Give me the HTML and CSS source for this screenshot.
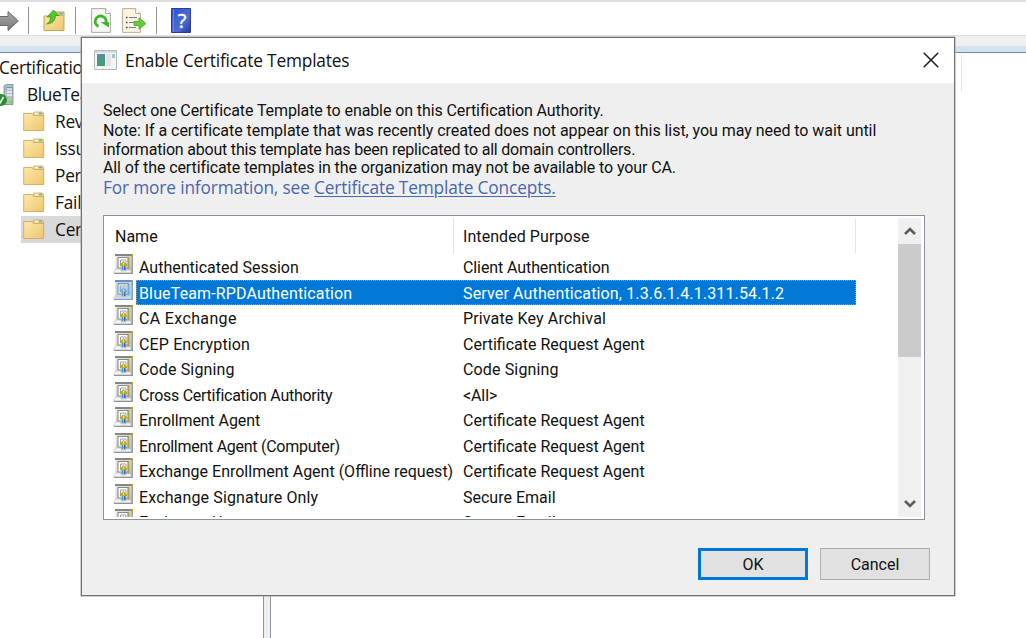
FILE: index.html
```html
<!DOCTYPE html>
<html lang="en">
<head>
<meta charset="utf-8">
<title>Enable Certificate Templates</title>
<link rel="stylesheet" href="styles.css">
</head>
<body>
<svg width="0" height="0" class="defs" aria-hidden="true">
  <defs>
    <linearGradient id="gold" x1="0" y1="0" x2="1" y2="1"><stop offset="0" stop-color="#ffe9ac"/><stop offset="1" stop-color="#ecc66e"/></linearGradient>
    <linearGradient id="grey" x1="0" y1="0" x2="0" y2="1"><stop offset="0" stop-color="#aaa"/><stop offset="1" stop-color="#777"/></linearGradient>
    <linearGradient id="blue" x1="0" y1="0" x2="1" y2="1"><stop offset="0" stop-color="#2d51c9"/><stop offset=".6" stop-color="#4d6ed4"/><stop offset="1" stop-color="#243a9c"/></linearGradient>
    <linearGradient id="app" x1="0" y1="0" x2="0.4" y2="1"><stop offset="0" stop-color="#5b87b8"/><stop offset="1" stop-color="#44a06a"/></linearGradient>
    <linearGradient id="panel" x1="0" y1="0" x2="1" y2="1"><stop offset="0" stop-color="#ececec"/><stop offset="1" stop-color="#b4b4b4"/></linearGradient>
    <symbol id="folder" viewBox="0 0 22 21">
      <path d="M9.500 4.500L11 1h8.500l1 1.500v5h-11z" fill="#f0d38c" stroke="#c9a45c" stroke-width=".8"/>
      <path d="M12 2.500h4" stroke="#fff8dc" stroke-width="1.500"/><path d="M15.500 2.500h3.500" stroke="#5daee0" stroke-width="1.500"/>
      <path d="M.7 2.500h8.500l1.300 2h10.200V19.500H.7z" fill="url(#gold)" stroke="#cfa95c" stroke-width=".9"/>
    </symbol>
    <symbol id="tpl" viewBox="0 0 20 21">
      <path d="M2.500 0H20v20H2.500z" fill="url(#panel)"/>
      <path d="M2 1h17" stroke="#868686" stroke-width="2"/>
      <path d="M19.300 3v17" stroke="#989898" stroke-width="1.200"/>
      <path d="M5 3.500h10v10.500H5z" fill="#fff" stroke="#8a8a8a" stroke-width="1.100"/>
      <path d="M15.600 3v12" stroke="#aaa24a" stroke-width="1.300"/>
      <path d="M7.500 6h5.500v5H7.500z" fill="#fff" stroke="#a0a0a0" stroke-width="1"/>
      <path d="M18.500 0h1.500v3h-1.500z" fill="#b5aa20"/>
      <path d="M10.500 7l4 4-1 1.500h-6L6.500 11z" fill="#b5a92a"/><path d="M10.500 8.500v3" stroke="#eee36a" stroke-width="1.300"/>
      <path d="M2.500 15L.6 18.800h17.400V16h-5v1H8v-2z" fill="#f5f5f5" stroke="#b8b8b8" stroke-width=".6"/>
      <path d="M9.500 12v4" stroke="#35a8b8" stroke-width="1.300"/><path d="M11.800 12v4" stroke="#3348d0" stroke-width="1.300"/>
      <path d="M1 19.500h18.500" stroke="#929292"/>
    </symbol>
  </defs>
</svg>
<div class="console">
  <div class="toolbar">
    <svg class="t-arrow" width="19" height="22" viewBox="0 0 19 22"><path d="M-6 6.500H8V1.500L18.300 11 8 20.500V15.500H-6z" fill="url(#grey)" stroke="#6a6a6a"/></svg>
    <i class="sep s1"></i>
    <svg class="t-up" width="22" height="24" viewBox="0 0 22 24"><path d="M1 8h9l2-4h9v18.500H1z" fill="url(#gold)" stroke="#c5a25a"/><path d="M11 7.500h9.500" stroke="#c5a25a" stroke-width=".8"/><path d="M16 5.600h4" stroke="#58a8dc" stroke-width="1.500"/><path d="M3.500 16c2.500-1 4-3 4-7H4l6.500-7L16 7.500h-3.500c0 5-3.500 8.500-9 8.500z" fill="#55c62b" stroke="#36941a" stroke-width=".7"/></svg>
    <i class="sep s2"></i>
    <svg class="t-ref" width="20" height="25" viewBox="0 0 20 25"><path d="M.6.6h14l4.800 4.800v19H.6z" fill="#f6f6f3" stroke="#aaa"/><path d="M14.600.6v4.800h4.800" fill="#fff" stroke="#aaa"/><path d="M7.500 18.400A5.400 5.400 0 1 1 14.800 15" fill="none" stroke="#3cb628" stroke-width="2.800"/><path d="M9.500 14h8.500v5.500z" fill="#3cb628"/></svg>
    <svg class="t-exp" width="25" height="25" viewBox="0 0 25 25"><path d="M.6.6h13l4.800 4.800v19H.6z" fill="#f9f3df" stroke="#b9ae91"/><path d="M13.600.6v4.800h4.800" fill="#fff" stroke="#b9ae91"/><path d="M4 9.500h1.500M4 14.500h1.500M4 19.500h1.500" stroke="#444" stroke-width="1.500"/><path d="M7 9.500h8M7 14.500h5M7 19.500h7" stroke="#8177a0" stroke-width="1.200"/><path d="M12 13.500h5v-3.700l7 5.700-7 5.700v-3.700h-5z" fill="#62ce38" stroke="#46a725" stroke-width=".8"/></svg>
    <i class="sep s3"></i>
    <svg class="t-help" width="20" height="25" viewBox="0 0 20 25"><path d="M.5.5h19v24H.5z" fill="url(#blue)" stroke="#2a408f"/><path d="M2.500 1v23" stroke="#6b88df"/><text x="11" y="19.500" text-anchor="middle" class="q">?</text></svg>
  </div>
  <div class="band"></div>
  <div class="panes">
    <div class="tree">
      <div class="root">Certification</div>
      <div class="server"><svg width="17" height="22" viewBox="0 0 17 22"><path d="M4 1.500L7 .5h6v20H4z" fill="#b6bec4" stroke="#7c858b" stroke-width=".8"/><path d="M6.500 3h6v3h-6z" fill="#6d96ae"/><path d="M7 5h5M7 8h5M7 11h5" stroke="#edf2f5" stroke-width="1.300"/><path d="M9 18h3" stroke="#67e622" stroke-width="2.500"/><circle cx="1" cy="16" r="6" fill="#24902b"/><path d="M-2 16.500l2 2.500 3.500-6" fill="none" stroke="#fff" stroke-width="1.600"/></svg><span>BlueTeam</span></div>
      <div class="node"><svg width="22" height="21"><use href="#folder"/></svg><span>Rev</span></div>
      <div class="node"><svg width="22" height="21"><use href="#folder"/></svg><span>Issu</span></div>
      <div class="node"><svg width="22" height="21"><use href="#folder"/></svg><span>Per</span></div>
      <div class="node"><svg width="22" height="21"><use href="#folder"/></svg><span>Fail</span></div>
      <div class="node current"><svg width="22" height="21"><use href="#folder"/></svg><span>Cer</span></div>
    </div>
    <div class="splitter"></div>
    <div class="content"><i class="col-end"></i></div>
  </div>
</div>

<div class="dialog">
  <div class="titlebar">
    <svg width="23" height="20" viewBox="0 0 23 20"><path d="M.5.5h22v19H.5z" fill="#f3f5f6" stroke="#b3b8bd"/><path d="M1 2h21" stroke="#ccd2d8" stroke-width="1.500"/><path d="M3 4h8v12H3z" fill="url(#app)"/><path d="M12 4h5v12h-5z" fill="#e2e4e6"/><path d="M18 4h3v4h-3z" fill="#a3c4c4"/></svg>
    <span class="title">Enable Certificate Templates</span>
    <svg class="close" width="16" height="16" viewBox="0 0 16 16"><path d="M.7.7l14.600 14.600M15.300.7L.7 15.300" stroke="#1c1c1c" stroke-width="1.500"/></svg>
  </div>
  <div class="body">
    <div class="note">
      <p class="n1">Select one Certificate Template to enable on this Certification Authority.</p>
      <p class="n2">Note: If a certificate template that was recently created does not appear on this list, you may need to wait until</p>
      <p class="n3">information about this template has been replicated to all domain controllers.</p>
      <p class="n4">All of the certificate templates in the organization may not be available to your CA.</p>
      <p class="more">For more information, see <a>Certificate Template Concepts.</a></p>
    </div>
    <div class="list">
      <div class="table">
        <div class="head"><span class="h1">Name</span><span class="h2">Intended Purpose</span></div>
        <div class="row"><svg><use href="#tpl"/></svg><div class="cells"><span>Authenticated Session</span><span class="snug">Client Authentication</span></div></div>
        <div class="row selected"><svg><use href="#tpl"/></svg><div class="cells"><span class="wide">BlueTeam-RPDAuthentication</span><span class="wide">Server Authentication, 1.3.6.1.4.1.311.54.1.2</span></div></div>
        <div class="row"><svg><use href="#tpl"/></svg><div class="cells"><span class="wider">CA Exchange</span><span class="wide">Private Key Archival</span></div></div>
        <div class="row"><svg><use href="#tpl"/></svg><div class="cells"><span class="wide">CEP Encryption</span><span>Certificate Request Agent</span></div></div>
        <div class="row"><svg><use href="#tpl"/></svg><div class="cells"><span class="wide">Code Signing</span><span class="wide">Code Signing</span></div></div>
        <div class="row"><svg><use href="#tpl"/></svg><div class="cells"><span class="tight">Cross Certification Authority</span><span class="snug">&lt;All&gt;</span></div></div>
        <div class="row"><svg><use href="#tpl"/></svg><div class="cells"><span class="snug">Enrollment Agent</span><span>Certificate Request Agent</span></div></div>
        <div class="row"><svg><use href="#tpl"/></svg><div class="cells"><span class="tight">Enrollment Agent (Computer)</span><span>Certificate Request Agent</span></div></div>
        <div class="row"><svg><use href="#tpl"/></svg><div class="cells"><span>Exchange Enrollment Agent (Offline request)</span><span>Certificate Request Agent</span></div></div>
        <div class="row"><svg><use href="#tpl"/></svg><div class="cells"><span class="wide">Exchange Signature Only</span><span>Secure Email</span></div></div>
        <div class="row"><svg><use href="#tpl"/></svg><div class="cells"><span>Exchange User</span><span>Secure Email</span></div></div>
      </div>
      <div class="scroll">
        <svg width="12" height="10" viewBox="0 0 12 10"><path d="M1 8l5-5 5 5" fill="none" stroke="#5c5c5c" stroke-width="2.600"/></svg>
        <div class="thumb"></div>
        <svg class="down" width="12" height="10" viewBox="0 0 12 10"><path d="M1 2l5 5 5-5" fill="none" stroke="#5c5c5c" stroke-width="2.600"/></svg>
      </div>
    </div>
    <div class="buttons"><button class="ok">OK</button><button>Cancel</button></div>
  </div>
</div>
</body>
</html>
```
FILE: styles.css
```css
* { box-sizing: border-box; }
body { margin: 0; width: 1026px; height: 638px; overflow: hidden; background: #fff; position: relative; color: #111; font-family: "Open Sans", "Noto Sans", sans-serif; }
svg { display: block; flex: none; }
.defs { position: absolute; }
p { margin: 0; }

.console { height: 638px; display: flex; flex-direction: column; }
.toolbar { height: 35px; flex: none; border-top: 2px solid #dedede; display: flex; align-items: flex-start; padding-top: 6px; overflow: hidden; }
.t-arrow { margin-top: 2px; }
.sep { width: 1px; height: 27px; margin-top: -1px; background: #929292; flex: none; }
.s1 { margin-left: 9px; }
.t-up { margin-left: 14px; }
.s2 { margin-left: 10px; }
.t-ref { margin-left: 15px; }
.t-exp { margin-left: 11px; }
.s3 { margin-left: 9px; }
.t-help { margin-left: 14px; overflow: visible; }
.q { font: 20px "Open Sans", sans-serif; fill: #fff; stroke: #fff; stroke-width: .4px; }
.band { height: 18px; flex: none; border-top: 1px solid #dedede; border-bottom: 1px solid #7b8797; background: linear-gradient(#efefef 10px, #d3e2f0 10px); }
.panes { flex: 1; display: flex; min-height: 0; }
.tree { width: 263px; padding-top: 1px; font-size: 17.300px; line-height: 27px; white-space: nowrap; overflow: hidden; }
.root { letter-spacing: -.3px; margin-left: -1px; }
.server { display: flex; align-items: center; letter-spacing: -.4px; }
.server span { margin-left: 10px; }
.node { display: flex; align-items: center; height: 27px; margin-left: 21px; padding-left: 2px; }
.node span { margin-left: 10px; letter-spacing: -.25px; }
.node.current { background: #d9d9d9; }
.splitter { width: 8px; background: #efefef; border-left: 1.500px solid #8d949e; border-right: 1.500px solid #8d949e; }
.content { flex: 1; display: flex; padding: 2px 64px 0 0; justify-content: flex-end; }
.col-end { width: 1px; height: 36px; background: #e5e5e5; }

.dialog { position: absolute; left: 81px; top: 37px; width: 874px; height: 559px; border: 1px solid #727272; background: #efefef; display: flex; flex-direction: column; box-shadow: 0 0 0 .5px #a0a0a0; }
.titlebar { height: 45px; flex: none; background: #fff; display: flex; align-items: center; padding: 0 15px 2px 12px; }
.title { margin: 2px 0 0 8px; font-size: 17.300px; letter-spacing: -.18px; }
.close { margin-left: auto; }
.body { flex: 1; padding: 18px 29px 0 21px; display: flex; flex-direction: column; font-family: Roboto, "Liberation Sans", sans-serif; font-size: 16px; }
.note { height: 115px; white-space: nowrap; }
.note p { height: 19px; line-height: 20px; width: max-content; }
.note .n1 { height: 20px; letter-spacing: -.095px; }
.note .n2 { letter-spacing: -.05px; }
.note .n3 { height: 18px; letter-spacing: -.2px; }
.note .n4 { height: 20px; letter-spacing: -.105px; }
.note .more { height: 20px; line-height: 20px; font-family: "Open Sans", "Noto Sans", sans-serif; font-size: 17.300px; letter-spacing: -.15px; color: #4a67ad; }
.more a { text-decoration: underline; text-underline-offset: 2px; text-decoration-thickness: 1px; }
.list { height: 305px; margin-top: -1px; flex: none; border: 1.500px solid #8b929c; background: #fff; display: flex; justify-content: space-between; padding: 2px 3px 2px 9px; }
.table { width: 743px; overflow: hidden; white-space: nowrap; }
.head { height: 36px; display: flex; line-height: 37px; }
.head span { border-right: 1px solid #e5e5e5; }
.h1 { width: 341px; padding-left: 2px; }
.h2 { width: 402px; padding-left: 9px; letter-spacing: .07px; }
.row { height: 25.500px; display: flex; }
.row svg { width: 20px; height: 21px; }
.cells { margin-left: 3px; width: 720px; height: 25.500px; line-height: 27px; display: grid; grid-template-columns: 324px 1fr; padding-left: 3px; }
.wide { letter-spacing: .14px; }
.wider { letter-spacing: .35px; }
.snug { letter-spacing: -.1px; }
.tight { letter-spacing: -.27px; }
.selected svg { filter: sepia(1) hue-rotate(175deg) saturate(1.700) brightness(.85); }
.selected .cells { background: #0078d7; color: #fff; outline: 1px dotted #e68a42; outline-offset: -1px; }
.scroll { width: 23px; background: #f0f0f0; display: flex; flex-direction: column; align-items: center; padding-top: 8px; }
.thumb { width: 23px; height: 113px; margin-top: 8px; background: #cbcbcb; }
.down { margin-top: auto; margin-bottom: 8px; }
.buttons { display: flex; justify-content: flex-end; gap: 12px; margin: 28px -5px 0 0; }
.buttons button { width: 110px; height: 32px; padding: 0; border: 1px solid #adadad; background: #e1e1e1; font: inherit; color: #111; }
.buttons .ok { border: 3px solid #0078d7; }
```
